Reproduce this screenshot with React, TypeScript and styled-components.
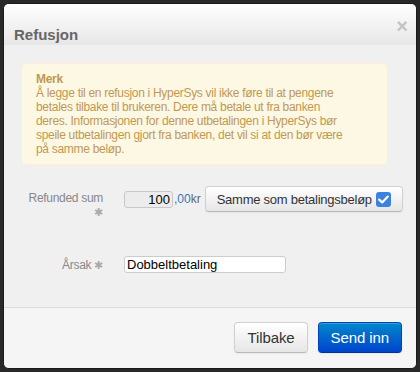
import styled, { createGlobalStyle } from 'styled-components';

const GlobalStyle = createGlobalStyle`
  html, body {
    margin: 0;
    padding: 0;
    background: #292929;
  }
  body {
    font-family: 'Liberation Sans', Arial, sans-serif;
    width: 420px;
    height: 372px;
    overflow: hidden;
  }
`;

const Modal = styled.div`
  margin: 3px;
  width: 414px;
  height: 366px;
  box-sizing: border-box;
  border: 1px solid #1a1a1a;
  border-radius: 6px;
  overflow: hidden;
  display: flex;
  flex-direction: column;
  background: #f0f0f0;
`;

const Header = styled.div`
  height: 41px;
  flex: none;
  box-sizing: border-box;
  padding: 21px 10px 0 10px;
  display: flex;
  justify-content: space-between;
  align-items: flex-start;
  background: linear-gradient(#ffffff, #e6e6e6);
`;

const Title = styled.h3`
  margin: 0;
  font-size: 15px;
  line-height: 20px;
  font-weight: bold;
  color: #666;
`;

const Close = styled.span`
  margin-top: -9px;
  margin-right: -2px;
  font-size: 20px;
  font-weight: bold;
  line-height: 20px;
  color: #c4c4c4;
`;

const Body = styled.div`
  flex: 1;
  padding: 18px 28px 0 17px;
`;

const Alert = styled.div`
  background: #fcf8e3;
  border: 1px solid #fbeed5;
  border-radius: 4px;
  padding: 8px 35px 8px 14px;
  color: #c09853;
  font-size: 12px;
  letter-spacing: -0.3px;
  line-height: 14px;
`;

const AlertTitle = styled.div`
  font-weight: bold;
`;

const Form = styled.div`
  margin-top: 21px;
  display: grid;
  grid-template-columns: 82px 1fr;
  column-gap: 21px;
  row-gap: 36px;
  align-items: start;
`;

const Label = styled.label<{ $top: number }>`
  padding-top: ${(p) => p.$top}px;
  text-align: right;
  font-size: 12px;
  letter-spacing: -0.3px;
  line-height: 14px;
  color: #888;
`;

const Req = styled.span`
  color: #aaa;
  font-size: 11px;
`;

const Controls = styled.div`
  display: flex;
  align-items: center;
`;

const AmountInput = styled.div`
  width: 49px;
  height: 17px;
  box-sizing: border-box;
  border: 1px solid #c8c8c8;
  border-radius: 3px;
  background: #ececec;
  text-align: right;
  padding-right: 2px;
  font-size: 13px;
  line-height: 15px;
  color: #000;
`;

const Decimals = styled.span`
  color: #2b7bb9;
  font-size: 12px;
  margin-left: 1px;
`;

const Currency = styled.span`
  color: #666;
  font-size: 12px;
  margin-right: 4px;
`;

const Button = styled.button<{ $primary?: boolean }>`
  font-family: inherit;
  box-sizing: border-box;
  border-radius: 4px;
  cursor: pointer;
  border: 1px solid ${(p) => (p.$primary ? '#0044bb' : '#d0d0d0')};
  border-bottom-color: ${(p) => (p.$primary ? '#003399' : '#b8b8b8')};
  color: ${(p) => (p.$primary ? '#fff' : '#333')};
  background: ${(p) =>
    p.$primary ? 'linear-gradient(#0088cc, #0044cc)' : 'linear-gradient(#ffffff, #e6e6e6)'};
  box-shadow: inset 0 1px 0 rgba(255, 255, 255, 0.2), 0 1px 2px rgba(0, 0, 0, 0.05);
`;

const SameButton = styled(Button)`
  height: 26px;
  width: 198px;
  padding: 0 0 0 11px;
  display: flex;
  align-items: center;
  gap: 4px;
  font-size: 13px;
  letter-spacing: -0.25px;
`;

const Check = styled.span`
  width: 15px;
  height: 15px;
  border-radius: 3px;
  background: #3b82e0;
  display: inline-flex;
  align-items: center;
  justify-content: center;
`;

const TextInput = styled.div`
  margin-top: 1px;
  width: 162px;
  height: 17px;
  box-sizing: border-box;
  border: 1px solid #ccc;
  border-radius: 3px;
  background: #fff;
  padding-left: 2px;
  font-size: 13px;
  line-height: 15px;
  color: #000;
`;

const Footer = styled.div`
  height: 61px;
  flex: none;
  box-sizing: border-box;
  border-top: 1px solid #dcdcdc;
  background: #f5f5f5;
  display: flex;
  justify-content: flex-end;
  align-items: flex-start;
  gap: 10px;
  padding: 14px 14px 0 0;
`;

const FooterButton = styled(Button)`
  height: 31px;
  font-size: 15px;
  letter-spacing: -0.1px;
  padding: 0 12px;
`;

export default function App() {
  return (
    <>
      <GlobalStyle />
      <Modal>
        <Header>
          <Title>Refusjon</Title>
          <Close>×</Close>
        </Header>
        <Body>
          <Alert>
            <AlertTitle>Merk</AlertTitle>
            Å legge til en refusjon i HyperSys vil ikke føre til at pengene betales tilbake til
            brukeren. Dere må betale ut fra banken deres. Informasjonen for denne utbetalingen i
            HyperSys bør speile utbetalingen gjort fra banken, det vil si at den bør være på samme
            beløp.
          </Alert>
          <Form>
            <Label $top={5}>
              Refunded sum <Req>✱</Req>
            </Label>
            <Controls>
              <AmountInput>100</AmountInput>
              <Decimals>,00</Decimals>
              <Currency>kr</Currency>
              <SameButton>
                Samme som betalingsbeløp
                <Check>
                  <svg width="11" height="9" viewBox="0 0 11 9">
                    <path
                      d="M1.2 4.6 L4.2 7.4 L9.8 1.6"
                      fill="none"
                      stroke="#fff"
                      strokeWidth="2.2"
                      strokeLinecap="round"
                      strokeLinejoin="round"
                    />
                  </svg>
                </Check>
              </SameButton>
            </Controls>
            <Label $top={3}>
              Årsak <Req>✱</Req>
            </Label>
            <TextInput>Dobbeltbetaling</TextInput>
          </Form>
        </Body>
        <Footer>
          <FooterButton>Tilbake</FooterButton>
          <FooterButton $primary>Send inn</FooterButton>
        </Footer>
      </Modal>
    </>
  );
}
